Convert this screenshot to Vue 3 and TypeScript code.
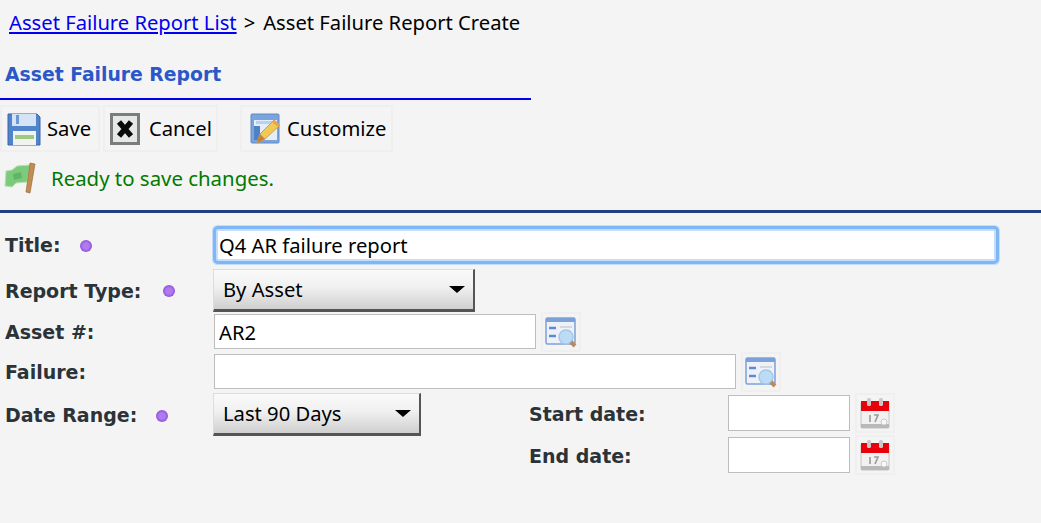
<script setup lang="ts">
const blur = 'icon'
</script>

<template>
  <div class="page">
    <div class="crumbs"><a href="#" class="link">Asset Failure Report List</a><span class="sep">&gt;</span>Asset Failure Report Create</div>
    <h1 class="heading">Asset Failure Report</h1>
    <div class="toolbar">
      <div class="tool save">
        <svg :class="blur" width="34" height="34" viewBox="0 0 34 34">
          <path d="M1 2h29l3 3v28H1z" fill="#4f83cc" stroke="#3a67ad"/>
          <rect x="5" y="2" width="24" height="12" fill="#d5e3f5"/>
          <rect x="9" y="3" width="3" height="9" fill="#6c97d6"/>
          <rect x="6" y="19" width="23" height="14" fill="#f0f3ee"/>
          <rect x="8" y="23" width="19" height="4" fill="#9bca7f"/>
        </svg>
        <span>Save</span>
      </div>
      <div class="tool cancel">
        <svg :class="blur" width="30" height="32" viewBox="0 0 30 32">
          <rect x="1.5" y="1.5" width="27" height="29" fill="#e6e8e8" stroke="#7c7c7c" stroke-width="3"/>
          <path d="M9 9l12 14M21 9L9 23" stroke="#0a0a0a" stroke-width="5.5"/>
        </svg>
        <span>Cancel</span>
      </div>
      <div class="tool customize">
        <svg :class="blur" width="32" height="34" viewBox="0 0 32 34">
          <rect x="1" y="2" width="28" height="29" rx="1" fill="#7ba4dc" stroke="#5d8bc9"/>
          <rect x="4" y="8" width="23" height="20" fill="#e4edf8"/>
          <rect x="4" y="14" width="6" height="14" fill="#4d82c6"/>
          <rect x="6" y="9" width="19" height="3" fill="#b9d0ee"/>
          <path d="M7 31l3-9L24 8l6 5-15 14z" fill="#f1ca55" stroke="#d49f42"/>
          <path d="M7 31l3-9 5 5z" fill="#c77e3c"/>
          <path d="M24 8l6 5-2 2-6-5z" fill="#e8a25a"/>
        </svg>
        <span>Customize</span>
      </div>
    </div>
    <div class="status">
      <svg :class="blur" width="32" height="32" viewBox="0 0 32 32">
        <path d="M2 9l6-1 5-4 13-1-3 17-11 1-4 4-7-1z" fill="#7ccb7c" stroke="#b5e0ae"/>
        <path d="M9 12l8-2 1 6-8 2z" fill="#62b566"/>
        <path d="M26 1l5 1-5 29-4-1z" fill="#c08d52" stroke="#8f6131" stroke-width=".6"/>
      </svg>
      <span>Ready to save changes.</span>
    </div>
    <div class="rule"></div>

    <form class="form" @submit.prevent>
      <div class="row title-row">
        <div class="label">Title:<i class="dot"></i></div>
        <input class="field focus" value="Q4 AR failure report" />
      </div>
      <div class="row type-row">
        <div class="label">Report Type:<i class="dot dot-wide"></i></div>
        <div class="select type-sel"><span>By Asset</span><b class="arrow"></b></div>
      </div>
      <div class="row lookup-row">
        <div class="label">Asset #:</div>
        <input class="field asset" value="AR2" />
        <div class="iconbox">
          <svg :class="blur" width="32" height="32" viewBox="0 0 32 32">
            <rect x="1" y="2" width="29" height="26" rx="1.5" fill="#eef2f8" stroke="#7ba1d8" stroke-width="1.5"/>
            <rect x="1" y="2" width="29" height="4" fill="#7ba1d8"/>
            <path d="M4 12h7M4 20h7" stroke="#5d8bd0" stroke-width="2.5"/>
            <path d="M15 11h12" stroke="#bbb"/>
            <circle cx="21" cy="21" r="7" fill="#bcdcf6" stroke="#a3c8ea" stroke-width="1.5"/>
            <path d="M26 26l4 4" stroke="#c08a55" stroke-width="4"/>
          </svg>
        </div>
      </div>
      <div class="row lookup-row">
        <div class="label">Failure:</div>
        <input class="field failure" />
        <div class="iconbox">
          <svg :class="blur" width="32" height="32" viewBox="0 0 32 32">
            <rect x="1" y="2" width="29" height="26" rx="1.5" fill="#eef2f8" stroke="#7ba1d8" stroke-width="1.5"/>
            <rect x="1" y="2" width="29" height="4" fill="#7ba1d8"/>
            <path d="M4 12h7M4 20h7" stroke="#5d8bd0" stroke-width="2.5"/>
            <path d="M15 11h12" stroke="#bbb"/>
            <circle cx="21" cy="21" r="7" fill="#bcdcf6" stroke="#a3c8ea" stroke-width="1.5"/>
            <path d="M26 26l4 4" stroke="#c08a55" stroke-width="4"/>
          </svg>
        </div>
      </div>
      <div class="row date-row">
        <div class="label">Date Range:<i class="dot"></i></div>
        <div class="select range-sel"><span>Last 90 Days</span><b class="arrow"></b></div>
        <div class="dates">
          <div class="date" v-for="d in ['Start date:', 'End date:']" :key="d">
            <div class="label date-label">{{ d }}</div>
            <input class="field datefield" />
            <div class="iconbox">
              <svg :class="blur" width="30" height="32" viewBox="0 0 30 32">
                <rect x="1" y="5" width="28" height="26" rx="1" fill="#f1f1f1" stroke="#c4c4c4"/>
                <rect x="1" y="4" width="28" height="10" fill="#e8000a"/>
                <rect x="7" y="1" width="4" height="8" rx="1.5" fill="#c9c9c9"/>
                <rect x="19" y="1" width="4" height="8" rx="1.5" fill="#c9c9c9"/>
                <rect x="1" y="27" width="28" height="4" fill="#b9b9b9"/>
                <path d="M10 18v7M14 18h4l-3 7" stroke="#9a9a9a" stroke-width="1.6" fill="none"/>
                <circle cx="24" cy="25" r="3" fill="#f8f8f8" stroke="#ccc"/>
              </svg>
            </div>
          </div>
        </div>
      </div>
    </form>
  </div>
</template>

<style scoped>
.page {
  height: 523px;
  overflow: hidden;
  font-family: "Noto Sans", sans-serif;
  font-size: 20.2px;
  color: #000;
  background: #f4f4f4;
}
.crumbs {
  padding: 9px 0 0 9px;
  height: 31px;
  line-height: 26px;
  white-space: nowrap;
}
.link { color: #0000ee; text-decoration: underline; }
.sep { margin: 0 8px 0 7px; }
.heading {
  margin: 0;
  padding-left: 5px;
  width: 526px;
  height: 58px;
  box-sizing: content-box;
  line-height: 70px;
  font-family: "DejaVu Sans", sans-serif;
  font-size: 18.8px;
  font-weight: 700;
  color: #2a58c8;
  border-bottom: 2px solid #0000f0;
}
.toolbar { display: flex; margin-top: 5px; height: 47px; }
.tool {
  display: flex;
  align-items: center;
  box-sizing: border-box;
  height: 47px;
  border: 2px solid #efefef;
  white-space: nowrap;
}
.tool span { margin-bottom: 2px; }
.save { width: 100px; padding-left: 5px; gap: 6px; }
.cancel { width: 115px; margin-left: 3px; padding-left: 5px; gap: 9px; }
.customize { width: 153px; margin-left: 22px; padding-left: 8px; gap: 5px; }
.status {
  display: flex;
  align-items: center;
  gap: 15px;
  height: 36px;
  margin-top: 8px;
  padding-left: 4px;
  font-size: 20.4px;
  color: #007a00;
}
.rule {
  height: 3px;
  margin-top: 14px;
  background: #1d4080;
}
.form { display: block; padding-top: 12px; }
.row { display: flex; align-items: center; }
.label {
  display: flex;
  align-items: center;
  flex: none;
  box-sizing: border-box;
  width: 213px;
  padding-left: 5px;
  font-family: "DejaVu Sans", sans-serif;
  font-size: 19px;
  font-weight: 700;
  color: #2b3338;
  white-space: nowrap;
}
.dot {
  flex: none;
  width: 12px;
  height: 12px;
  margin-left: 19px;
  margin-top: 2px;
  border-radius: 50%;
  background: radial-gradient(circle, #b07af0 0 35%, #8f55d8 70%, #c9b2ea 100%);
}
.dot-wide { margin-left: 22px; margin-top: 0; }
.field {
  box-sizing: border-box;
  height: 35px;
  padding: 0 4px;
  border: 1px solid #bdbdbd;
  background: #fff;
  font: inherit;
  color: #000;
  outline: none;
}
.title-row { height: 40px; }
.focus {
  width: 780px;
  height: 32px;
  margin-left: 3px;
  padding: 0 1px;
  border: 2px solid #c3ddfb;
  border-radius: 2px;
  box-shadow: 0 0 0 3px #7fb6f6, 0 0 0 4px #c3ddfb;
}
.type-row { height: 43px; margin-top: 4px; }
.select {
  display: flex;
  align-items: center;
  justify-content: space-between;
  box-sizing: border-box;
  height: 43px;
  padding: 0 10px 2px 9px;
  border-right: 2px solid #555;
  border-bottom: 3px solid #555;
  border-top: 1px solid #ddd;
  border-left: 1px solid #ddd;
  background: linear-gradient(#fafafa, #f0f0f0 45%, #cfcfcf);
}
.type-sel { width: 262px; }
.range-sel { width: 208px; }
.arrow {
  width: 0;
  height: 0;
  border-left: 8px solid transparent;
  border-right: 8px solid transparent;
  border-top: 7px solid #000;
  margin: 2px -2px 0 0;
}
.lookup-row { height: 40px; }
.lookup-row .field { margin: -1px 0 0 1px; }
.asset { width: 322px; }
.failure { width: 522px; }
.iconbox {
  display: flex;
  align-items: center;
  justify-content: center;
  flex: none;
  box-sizing: border-box;
  width: 40px;
  height: 40px;
  margin-left: 5px;
  border: 2px solid #efefef;
}
.date-row { align-items: flex-start; margin-top: 1px; }
.date-row > .label { height: 43px; }
.date-row > .select { flex: none; }
.dates { margin-left: 108px; }
.date { display: flex; align-items: center; height: 40px; margin-bottom: 2px; }
.date-label { width: 199px; padding: 2px 0 0; }
.datefield { width: 122px; height: 36px; }
.icon { display: block; flex: none; filter: blur(0.5px); }
</style>

<style>
html, body { margin: 0; background: #f4f4f4; }
</style>
